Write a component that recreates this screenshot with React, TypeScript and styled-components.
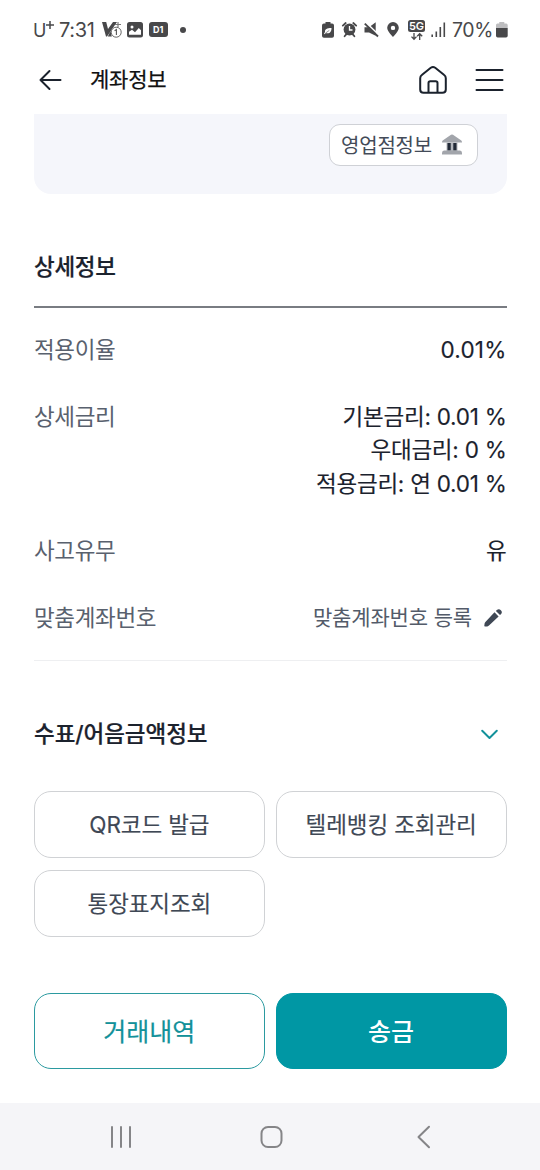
import React from 'react';
import styled, { createGlobalStyle } from 'styled-components';

const Global = createGlobalStyle`
  *, *::before, *::after { box-sizing: border-box; }
  body {
    margin: 0;
    background: #fff;
    font-family: Inter, 'Noto Sans CJK KR', sans-serif;
    color: #1c2430;
  }
  button { font-family: inherit; background: none; border: 0; padding: 0; margin: 0; }
  svg { display: block; flex: none; overflow: visible; }
`;

const Screen = styled.div`
  display: flex;
  flex-direction: column;
  width: 540px;
  height: 1170px;
  overflow: hidden;
`;

const StatusBar = styled.div`
  display: flex;
  justify-content: space-between;
  align-items: center;
  height: 59px;
  padding: 0 32px 0 33px;
  color: #48484a;
`;

const StatusGroup = styled.div`
  display: flex;
  align-items: center;
`;

const Slot = styled.span<{ $gap?: number }>`
  display: flex;
  margin-left: ${(p) => p.$gap ?? 0}px;
`;

const StatusText = styled.span<{ $width: number; $gap?: number; $spacing?: number; $size?: number }>`
  width: ${(p) => p.$width}px;
  margin-left: ${(p) => p.$gap ?? 0}px;
  font-size: ${(p) => p.$size ?? 19.5}px;
  line-height: 24px;
  letter-spacing: ${(p) => p.$spacing ?? 0}px;
  white-space: nowrap;
`;

const Carrier = styled.span`
  display: flex;
  align-items: flex-start;
  width: 26px;
  height: 24px;
  font-size: 18px;
  line-height: 25px;
`;

const CarrierMark = styled.span`
  display: flex;
  padding-top: 3px;
`;

const CarrierPlus = () => (
  <svg width="8" height="8" viewBox="0 0 8 8" stroke="#48484a" strokeWidth="1.500">
    <path d="M4 0v8M0 4h8" />
  </svg>
);

const Header = styled.header`
  display: flex;
  align-items: center;
  height: 55px;
  padding: 0 36.5px 14px 39px;
`;

const HeaderTitle = styled.h1`
  flex: 1;
  margin: 0 0 0 28px;
  font-size: 21px;
  font-weight: 400;
  -webkit-text-stroke: 0.25px currentColor;
  line-height: 40px;
  letter-spacing: -0.2px;
  color: #111;
`;

const IconButton = styled.button<{ $gap?: number }>`
  display: flex;
  margin-left: ${(p) => p.$gap ?? 0}px;
`;

const Content = styled.main`
  flex: 1;
  padding: 0 33.5px 0 34px;
`;

const Panel = styled.div`
  display: flex;
  justify-content: flex-end;
  align-items: flex-start;
  height: 80px;
  padding: 10px 28.5px 0 0;
  background: #f5f6fb;
  border-radius: 0 0 17px 17px;
`;

const BranchButton = styled.button`
  display: flex;
  align-items: center;
  justify-content: space-between;
  width: 149px;
  height: 42px;
  padding: 0 15px 2px 11px;
  border: 1px solid #cfd1d6;
  border-radius: 11px;
  background: #fff;
  font-size: 20px;
  letter-spacing: -0.2px;
  color: #434b58;
`;

const SectionTitle = styled.h2<{ $spacing?: number }>`
  margin: 0;
  font-size: 22.5px;
  font-weight: 500;
  -webkit-text-stroke: 0.2px currentColor;
  line-height: 40px;
  letter-spacing: ${(p) => p.$spacing ?? -0.3}px;
  color: #1b222d;
`;

const DetailHead = styled.div`
  height: 114px;
  padding-top: 53px;
  border-bottom: 2px solid #797c82;
`;

const Row = styled.div`
  display: flex;
  justify-content: space-between;
  align-items: flex-start;
  margin-bottom: 34px;
`;

const Rows = styled.div`
  display: flex;
  flex-direction: column;
  height: 353px;
  padding-top: 24.500px;
  border-bottom: 1px solid #eeeff1;
`;

const Label = styled.span`
  font-size: 22.5px;
  line-height: 33.5px;
  letter-spacing: -0.35px;
  color: #59616e;
`;

const Values = styled.div`
  display: flex;
  flex-direction: column;
  align-items: flex-end;
`;

const Value = styled.span<{ $spacing?: number }>`
  font-size: 22.5px;
  font-weight: 400;
  -webkit-text-stroke: 0.15px currentColor;
  line-height: 33.3px;
  letter-spacing: ${(p) => p.$spacing ?? -0.25}px;
  white-space: nowrap;
  color: #1b222d;
`;

const EditLink = styled.button`
  display: flex;
  align-items: center;
  gap: 11.500px;
  padding-right: 5px;
  font-size: 21px;
  line-height: 33.5px;
  letter-spacing: -0.15px;
  color: #535b69;
`;

const CheckHead = styled.div`
  display: flex;
  justify-content: space-between;
  align-items: center;
  padding: 53px 9px 0 0;
`;

const ButtonGrid = styled.div<{ $top: number }>`
  display: grid;
  grid-template-columns: 1fr 1fr;
  gap: 12px 11px;
  margin-top: ${(p) => p.$top}px;
`;

const OptionButton = styled.button`
  height: 67px;
  padding-bottom: 4px;
  border: 1px solid #d0d2d5;
  border-radius: 17px;
  font-size: 22.5px;
  font-weight: 400;
  -webkit-text-stroke: 0.15px currentColor;
  letter-spacing: -0.1px;
  color: #3f4855;
`;

const ActionButton = styled.button<{ $primary?: boolean }>`
  height: 76px;
  padding-bottom: 3px;
  border: 1px solid ${(p) => (p.$primary ? '#0097a4' : '#2b9aa0')};
  border-radius: 17px;
  background: ${(p) => (p.$primary ? '#0097a4' : '#fff')};
  font-size: 25px;
  font-weight: ${(p) => (p.$primary ? 500 : 400)};
  -webkit-text-stroke: ${(p) => (p.$primary ? 0 : 0.2)}px currentColor;
  letter-spacing: 0;
  color: ${(p) => (p.$primary ? '#fff' : '#12919a')};
`;

const NavBar = styled.nav`
  display: flex;
  justify-content: space-between;
  align-items: center;
  height: 67px;
  padding: 0 109.5px 0 110px;
  background: #f5f5f8;
`;

const NavKey = styled.button<{ $width: number }>`
  display: flex;
  justify-content: flex-end;
  width: ${(p) => p.$width}px;
`;

const ink = '#48484a';

const VaccineIcon = () => (
  <svg width="20" height="16" viewBox="0 0 20 16">
    <path d="M0 0h4.200l1.800 7L11 0h4L5 14.500H4z" fill={ink} />
    <path d="M8.500 9L5.800 14.500h4z" fill={ink} />
    <path d="M16 0v5M13 2.500h6" stroke="#777" strokeWidth="1.200" />
    <circle cx="14.200" cy="10.200" r="5" fill="#fff" stroke="#666" />
    <path d="M12.600 8.800l1.800-1.300v5.400" fill="none" stroke="#555" strokeWidth="1.100" />
  </svg>
);

const PictureIcon = () => (
  <svg width="16" height="16" viewBox="0 0 16 16">
    <rect width="16" height="15.500" rx="2.500" fill={ink} />
    <circle cx="5" cy="5" r="1.500" fill="#fff" />
    <path d="M2 12.800V9.800l3-2.100 3 2.500 3.800-4.300L14 8.200v4.600z" fill="#fff" />
  </svg>
);

const DayBadge = styled.span`
  width: 19.5px;
  height: 15px;
  margin-left: 5.5px;
  border-radius: 3px;
  background: ${ink};
  color: #fff;
  font-size: 9px;
  font-weight: 700;
  line-height: 15px;
  text-align: center;
`;

const Dot = styled.span`
  width: 6px;
  height: 6px;
  margin-left: 11.5px;
  border-radius: 50%;
  background: ${ink};
`;

const EcoBattery = () => (
  <svg width="12" height="16" viewBox="0 0 12 16">
    <path d="M3.500 0h5v1.500h1.600A1.900 1.900 0 0 1 12 3.400v10.500A1.900 1.900 0 0 1 10.100 15.700H1.900A1.900 1.900 0 0 1 0 13.900V3.400A1.900 1.900 0 0 1 1.900 1.500H3.500z" fill={ink} />
    <path d="M9.500 6C5 6 2.600 7.200 3 10L2 11.800l.8.5.9-1.200C8 12 9.500 9.800 9.500 6z" fill="#fff" />
    <path d="M3.600 11L7.300 8.400" stroke={ink} strokeWidth=".6" />
  </svg>
);

const AlarmIcon = () => (
  <svg width="15" height="15" viewBox="0 0 15 15">
    <circle cx="7.500" cy="7.500" r="5.900" fill={ink} />
    <path d="M.8 3.600L3.700 1M14.200 3.600L11.300 1M2.600 14.300l1.800-2.200M12.400 14.300l-1.800-2.200" stroke={ink} strokeWidth="1.800" strokeLinecap="round" />
    <path d="M7.500 4v4h3" fill="none" stroke="#fff" strokeWidth="1.300" />
  </svg>
);

const MuteIcon = () => (
  <svg width="16" height="16" viewBox="0 0 16 16">
    <path d="M.5 5.200h4.500L11.700.3v13.500L5 10.500H.5z" fill={ink} />
    <path d="M1.500 .2L15.500 13.500" stroke="#fff" strokeWidth="1.600" />
    <path d="M.8 1.600L14 14.500" stroke={ink} strokeWidth="1.900" />
  </svg>
);

const PinIcon = () => (
  <svg width="12" height="15" viewBox="0 0 12 15">
    <path fillRule="evenodd" d="M6 0a5.800 5.800 0 0 1 5.800 5.800C11.800 9.600 6 15 6 15S.2 9.600.2 5.800A5.800 5.800 0 0 1 6 0zm0 3.700a2.200 2.200 0 1 0 0 4.400 2.200 2.200 0 0 0 0-4.400z" fill={ink} />
  </svg>
);

const NetworkStack = styled.span`
  display: flex;
  flex-direction: column;
  align-items: center;
  gap: 1px;
  height: 20px;
  margin: 0 0 0 9px;
  width: 17px;
`;

const NetworkLabel = styled.span`
  width: 17px;
  height: 12px;
  border-radius: 2.5px;
  background: ${ink};
  color: #fff;
  font-size: 11px;
  font-weight: 600;
  line-height: 12px;
  text-align: center;
`;

const DataArrows = () => (
  <svg width="12" height="7" viewBox="0 0 12 7">
    <path d="M3 0v6M.5 3.600L3 6.200l2.500-2.600M8.700 7V.8M6.200 3.300L8.700.7l2.500 2.600" fill="none" stroke={ink} strokeWidth="1.300" />
  </svg>
);

const SignalIcon = () => (
  <svg width="15" height="15" viewBox="0 0 15 15">
    <path d="M1.200 12.500V15M5.300 9.500V15M9.300 5V15M13.300.5V15" stroke={ink} strokeWidth="1.600" />
  </svg>
);

const BatteryIcon = () => (
  <svg width="12" height="16" viewBox="0 0 12 16">
    <path d="M3.300 0h5v1.600h2A1.500 1.500 0 0 1 11.700 3v3H0V3a1.500 1.500 0 0 1 1.400-1.400h1.900z" fill="#bdbdbf" />
    <path d="M0 6h11.700v7.800a1.700 1.700 0 0 1-1.700 1.700H1.700A1.700 1.700 0 0 1 0 13.800z" fill={ink} />
  </svg>
);

const BackArrow = () => (
  <svg width="23" height="20" viewBox="0 0 23 20" fill="none" stroke="#1b222d" strokeWidth="2" strokeLinecap="round" strokeLinejoin="round">
    <path d="M10.500 1L1.500 10l9 9M1.500 10H21.500" />
  </svg>
);

const HomeIcon = () => (
  <svg width="28" height="28" viewBox="0 0 28 28" fill="none" stroke="#1b222d" strokeWidth="2" strokeLinejoin="round">
    <path d="M1.200 12.200c0-1.500.4-2.300 1.600-3.200l9-7.200c1.500-1.100 2.900-1.100 4.400 0l9 7.200c1.200.9 1.600 1.700 1.600 3.200V23.500c0 2.300-1.100 3.300-3.400 3.300H4.600c-2.300 0-3.400-1-3.400-3.300z" />
    <path d="M9.500 26.500V17c0-1.200.6-1.800 1.800-1.800h5.400c1.200 0 1.800.6 1.800 1.800v9.500" />
  </svg>
);

const MenuIcon = () => (
  <svg width="28" height="24" viewBox="0 0 28 24" stroke="#1b222d" strokeWidth="2" strokeLinecap="round">
    <path d="M.5 2h26M.5 12h26M.5 22h26" />
  </svg>
);

const BankIcon = () => (
  <svg width="20" height="21" viewBox="0 0 20 21">
    <path d="M9 .8q1-.7 2 0l8.300 5.600q.7.600.7 2.100H0q0-1.500.7-2.100z" fill="#a2a5ab" />
    <path d="M4.500 8.500h11v8.500h-11z" fill="#b4b7bd" />
    <path d="M5.500 9h3.200v7.500H5.500zM11.300 9h3.200v7.500h-3.200z" fill="#222a37" />
    <path d="M2 16.500h16q2 0 2 2.500v1.500H0V19q0-2.500 2-2.500z" fill="#a2a5ab" />
  </svg>
);

const PencilIcon = () => (
  <svg width="18" height="18" viewBox="0 0 18 18" fill="#3f4855">
    <path d="M10.500 3.300l4.100 4.100L5 16.600c-.5.500-1 .7-1.700.8L1 17.600c-.5 0-.8-.3-.7-.8l.3-2.300c.1-.6.400-1.100.8-1.500z" />
    <path d="M11.900 2l.9-.9a2.900 2.900 0 0 1 4.100 4.100l-.9.9z" />
  </svg>
);

const ChevronDown = () => (
  <svg width="17" height="10" viewBox="0 0 17 10" fill="none" stroke="#12919a" strokeWidth="2" strokeLinecap="round" strokeLinejoin="round">
    <path d="M1.200 1.800L8.500 9l7.300-7.200" />
  </svg>
);

const RecentsIcon = () => (
  <svg width="22" height="22" viewBox="0 0 22 22" stroke="#858588" strokeWidth="2" strokeLinecap="round">
    <path d="M2 1v20M11 1v20M20 1v20" />
  </svg>
);

const HomeKeyIcon = () => (
  <svg width="24" height="24" viewBox="0 0 24 24" fill="none" stroke="#858588" strokeWidth="2">
    <rect x="2.500" y="2" width="20" height="20" rx="6.500" />
  </svg>
);

const BackKeyIcon = () => (
  <svg width="14" height="22" viewBox="0 0 14 22" fill="none" stroke="#858588" strokeWidth="2" strokeLinecap="round" strokeLinejoin="round">
    <path d="M12 .8L1.500 11l10.500 10.200" />
  </svg>
);

export default function App() {
  return (
    <Screen>
      <Global />
      <StatusBar>
        <StatusGroup>
          <Carrier>U<CarrierMark><CarrierPlus /></CarrierMark></Carrier>
          <StatusText $width={38} $spacing={-0.3} $size={20}>7:31</StatusText>
          <Slot $gap={5}><VaccineIcon /></Slot>
          <Slot $gap={5}><PictureIcon /></Slot>
          <DayBadge>D1</DayBadge>
          <Dot />
        </StatusGroup>
        <StatusGroup>
          <EcoBattery />
          <Slot $gap={8}><AlarmIcon /></Slot>
          <Slot $gap={7}><MuteIcon /></Slot>
          <Slot $gap={7}><PinIcon /></Slot>
          <NetworkStack>
            <NetworkLabel>5G</NetworkLabel>
            <DataArrows />
          </NetworkStack>
          <Slot $gap={6}><SignalIcon /></Slot>
          <StatusText $width={41} $gap={6} $spacing={-0.4}>70%</StatusText>
          <Slot $gap={3}><BatteryIcon /></Slot>
        </StatusGroup>
      </StatusBar>
      <Header>
        <IconButton aria-label="뒤로"><BackArrow /></IconButton>
        <HeaderTitle>계좌정보</HeaderTitle>
        <IconButton aria-label="홈"><HomeIcon /></IconButton>
        <IconButton aria-label="메뉴" $gap={28.5}><MenuIcon /></IconButton>
      </Header>
      <Content>
        <Panel>
          <BranchButton>영업점정보<BankIcon /></BranchButton>
        </Panel>
        <DetailHead>
          <SectionTitle>상세정보</SectionTitle>
        </DetailHead>
        <Rows>
          <Row>
            <Label>적용이율</Label>
            <Value $spacing={0.2}>0.01%</Value>
          </Row>
          <Row>
            <Label>상세금리</Label>
            <Values>
              <Value>기본금리: 0.01 %</Value>
              <Value>우대금리: 0 %</Value>
              <Value>적용금리: 연 0.01 %</Value>
            </Values>
          </Row>
          <Row>
            <Label>사고유무</Label>
            <Value>유</Value>
          </Row>
          <Row>
            <Label>맞춤계좌번호</Label>
            <EditLink>맞춤계좌번호 등록<PencilIcon /></EditLink>
          </Row>
        </Rows>
        <CheckHead>
          <SectionTitle $spacing={-0.05}>수표/어음금액정보</SectionTitle>
          <ChevronDown />
        </CheckHead>
        <ButtonGrid $top={37}>
          <OptionButton>QR코드 발급</OptionButton>
          <OptionButton>텔레뱅킹 조회관리</OptionButton>
          <OptionButton>통장표지조회</OptionButton>
        </ButtonGrid>
        <ButtonGrid $top={56}>
          <ActionButton>거래내역</ActionButton>
          <ActionButton $primary>송금</ActionButton>
        </ButtonGrid>
      </Content>
      <NavBar>
        <NavKey aria-label="최근 앱" $width={22}><RecentsIcon /></NavKey>
        <NavKey aria-label="홈 화면" $width={24}><HomeKeyIcon /></NavKey>
        <NavKey aria-label="이전" $width={20}><BackKeyIcon /></NavKey>
      </NavBar>
    </Screen>
  );
}
